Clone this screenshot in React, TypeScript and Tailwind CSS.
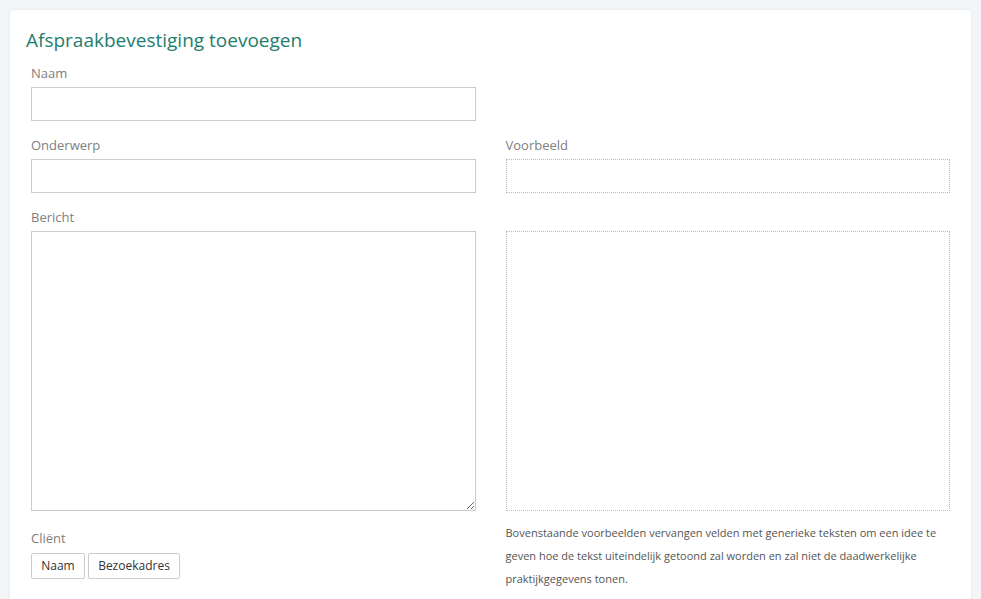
import React from "react";

export default function App() {
  const label = "block text-[13px] leading-[18px] text-[#808080] mb-[5px]";
  const input = "block w-full h-[34px] border border-[#cccccc] bg-white outline-none";
  return (
    <div className="min-h-[599px] bg-[#f3f6f9] pt-[10px] px-[10px] font-['Open_Sans',sans-serif]">
      <div className="bg-white rounded-[4px] shadow-[0_0_4px_rgba(0,0,0,0.06)] h-[600px]">
        <h1 className="pl-[16px] pt-[19px] text-[19px] leading-[22px] text-[#1e7d6e] font-normal">
          Afspraakbevestiging toevoegen
        </h1>
        <div className="px-[21px] pt-[13px] grid grid-cols-2 gap-x-[30px]">
          <div>
            <label className={label}>Naam</label>
            <input className={input} />
          </div>
          <div />
          <div className="mt-[15px]">
            <label className={label}>Onderwerp</label>
            <input className={input} />
          </div>
          <div className="mt-[15px]">
            <label className={label}>Voorbeeld</label>
            <div className="h-[34px] border border-dotted border-[#bbbbbb]" />
          </div>
          <div className="mt-[15px]">
            <label className={label}>Bericht</label>
            <textarea className="block w-full h-[280px] border border-[#cccccc] bg-white outline-none" />
            <label className={label + " mt-[18px]"}>Cliënt</label>
            <div className="flex gap-[3px] mt-[6px]">
              <button className="h-[26px] w-[54px] border border-[#cccccc] rounded-[2px] bg-white text-[12px] text-[#333]">
                Naam
              </button>
              <button className="h-[26px] w-[92px] border border-[#cccccc] rounded-[2px] bg-white text-[12px] text-[#333]">
                Bezoekadres
              </button>
            </div>
          </div>
          <div className="pt-[38px]">
            <div className="h-[280px] border border-dotted border-[#bbbbbb]" />
            <p className="mt-[10px] text-[11px] leading-[23px] text-[#555]">
              Bovenstaande voorbeelden vervangen velden met generieke teksten om een idee te geven hoe de tekst uiteindelijk getoond zal worden en zal niet de daadwerkelijke praktijkgegevens tonen.
            </p>
          </div>
        </div>
      </div>
    </div>
  );
}
